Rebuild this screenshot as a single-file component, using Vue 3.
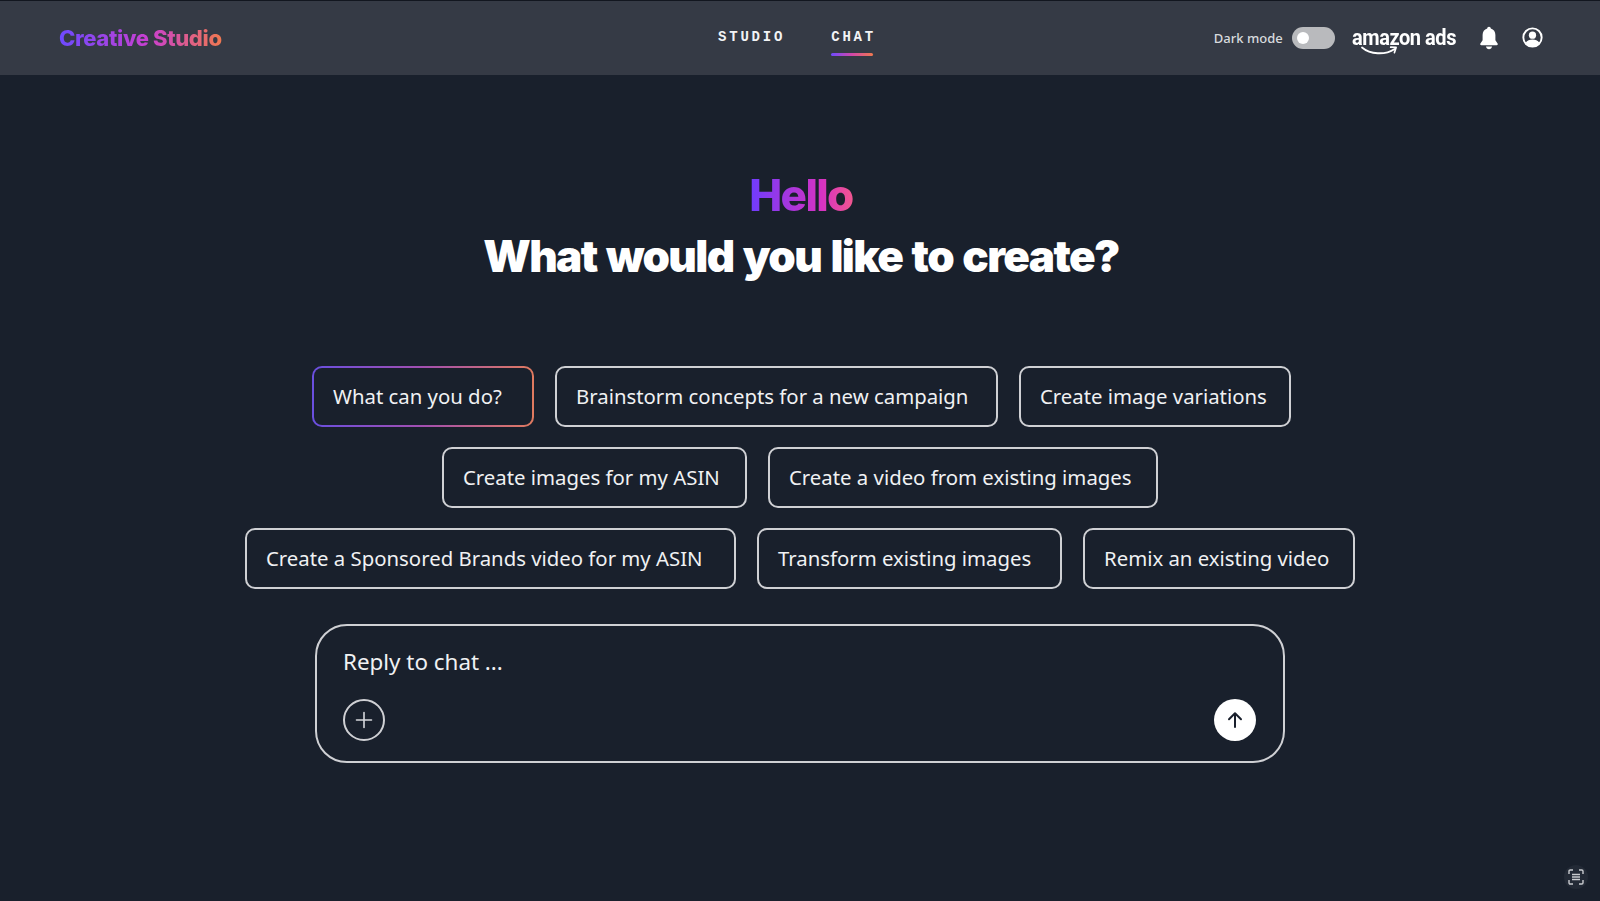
<template>
  <div class="page">
    <header class="topbar">
      <div class="logo">Creative Studio</div>

      <nav class="tabs">
        <a class="tab">STUDIO</a>
        <a class="tab active">CHAT</a>
      </nav>

      <div class="actions">
        <span class="dark-label">Dark mode</span>
        <span class="toggle"><span class="knob"></span></span>
        <div class="brand">
          <span>amazon ads</span>
          <svg class="smile" viewBox="0 0 42 12" fill="none">
            <path d="M1 2.500C10 9.500 26 10.500 37 4" stroke="#fff" stroke-width="2" stroke-linecap="round" />
            <path d="M32.500 2.200L38.500 2.400L36.600 7.600" stroke="#fff" stroke-width="1.800" stroke-linecap="round" stroke-linejoin="round" />
          </svg>
        </div>
        <svg class="bell" viewBox="0 0 20 24">
          <path d="M10 0.800c-1 0-1.700.7-1.800 1.700C5.300 3.300 3.600 5.800 3.600 9v5.200L1.400 17.600c-.5.800 0 1.700 1 1.700h15.200c1 0 1.500-.9 1-1.700l-2.200-3.400V9c0-3.200-1.700-5.700-4.600-6.500-.1-1-.8-1.700-1.800-1.700z" fill="#fff" />
          <path d="M6.900 20.600c.3 1.600 1.600 2.600 3.100 2.600s2.800-1 3.100-2.600z" fill="#fff" />
        </svg>
        <svg class="user" viewBox="0 0 22 22">
          <circle cx="11" cy="11" r="9.600" fill="none" stroke="#fff" stroke-width="2" />
          <circle cx="11" cy="8.600" r="3.800" fill="#fff" />
          <path d="M3.800 16.400c1.600-2.500 4.200-3.400 7.200-3.400s5.600.9 7.200 3.400c-1.600 2.400-4.200 4-7.200 4s-5.600-1.600-7.200-4z" fill="#fff" />
        </svg>
      </div>
    </header>

    <main class="content">
      <h1 class="hello">Hello</h1>
      <h2 class="question">What would you like to create?</h2>

      <div class="chips">
        <div v-for="(row, i) in rows" :key="i" class="chip-row">
          <button
            v-for="chip in row"
            :key="chip.label"
            class="chip"
            :class="{ selected: chip.label === selected }"
            :style="{ width: chip.width + 'px' }"
          >
            {{ chip.label }}
          </button>
        </div>
      </div>

      <div class="composer">
        <div class="placeholder">Reply to chat ...</div>
        <div class="composer-actions">
          <button class="add">
            <svg viewBox="0 0 20 20" width="20" height="20" fill="none">
              <path d="M10 2.500v15M2.500 10h15" stroke="#d6d8dc" stroke-width="1.600" stroke-linecap="round" />
            </svg>
          </button>
          <button class="send">
            <svg viewBox="0 0 20 20" width="20" height="20" fill="none">
              <path d="M10 17V3.500M4 9.200l6-6 6 6" stroke="#1a202c" stroke-width="2" stroke-linecap="round" stroke-linejoin="round" />
            </svg>
          </button>
        </div>
      </div>
    </main>

    <div class="capture">
      <svg viewBox="0 0 16 16" width="16" height="16" fill="none" stroke="#c9cbcf" stroke-width="1.400">
        <path d="M1 5V2.200C1 1.500 1.500 1 2.200 1H5M11 1h2.800c.7 0 1.200.5 1.200 1.200V5M15 11v2.800c0 .7-.5 1.200-1.200 1.200H11M5 15H2.200C1.500 15 1 14.500 1 13.800V11" />
        <path d="M4 5.500h8M4 8h8M4 10.500h8" stroke-width="1.500" />
      </svg>
    </div>
  </div>
</template>

<script setup>
const selected = "What can you do?"

const rows = [
  [
    { label: "What can you do?", width: 222 },
    { label: "Brainstorm concepts for a new campaign", width: 443 },
    { label: "Create image variations", width: 272 },
  ],
  [
    { label: "Create images for my ASIN", width: 305 },
    { label: "Create a video from existing images", width: 390 },
  ],
  [
    { label: "Create a Sponsored Brands video for my ASIN", width: 491 },
    { label: "Transform existing images", width: 305 },
    { label: "Remix an existing video", width: 272 },
  ],
]
</script>

<style>
html,
body {
  margin: 0;
  background: #19202c;
}
</style>

<style scoped>
.page {
  position: relative;
  height: 901px;
  overflow: hidden;
  background: #19202c;
  font-family: "Noto Sans", sans-serif;
  color: #fff;
}

/* Header */

.topbar {
  height: 74px;
  border-top: 1px solid #12161f;
  background: #353a45;
  display: grid;
  grid-template-columns: 1fr auto 1fr;
  align-items: center;
  padding: 0 57px 0 59px;
}

.logo {
  font-family: Inter, sans-serif;
  font-size: 22px;
  font-weight: 800;
  letter-spacing: -0.35px;
  width: fit-content;
  background: linear-gradient(90deg, #6d4aff, #c93fd0 55%, #f0784f);
  -webkit-background-clip: text;
  background-clip: text;
  color: transparent;
}

.tabs {
  display: flex;
  gap: 46px;
  transform: translateX(-4px);
}

.tab {
  position: relative;
  font-family: "Liberation Mono", monospace;
  font-size: 14px;
  font-weight: 700;
  letter-spacing: 2.8px;
  color: #f2f3f5;
  padding: 8px 0 10px;
}

.tab.active::after {
  content: "";
  position: absolute;
  left: 0;
  right: 3px;
  bottom: -1px;
  height: 3px;
  border-radius: 2px;
  background: linear-gradient(90deg, #6d4aff, #d347a8, #f0784f);
}

.actions {
  display: flex;
  align-items: center;
  justify-content: flex-end;
  margin-top: -1px;
}

.dark-label {
  font-size: 13px;
  font-weight: 500;
  color: #d8dade;
  margin-right: 9px;
}

.toggle {
  width: 43px;
  height: 22px;
  border-radius: 11px;
  background: #b9babd;
  display: flex;
  align-items: center;
  padding-left: 5px;
  box-sizing: border-box;
}

.knob {
  width: 12px;
  height: 12px;
  border-radius: 50%;
  background: #fff;
}

.brand {
  position: relative;
  margin: 0 -4px 0 17px;
  font-family: Roboto, sans-serif;
  font-size: 22px;
  font-weight: 700;
  letter-spacing: -0.5px;
  line-height: 30px;
  height: 30px;
  transform: scaleX(0.91);
  transform-origin: left;
}

.smile {
  position: absolute;
  left: 9px;
  top: 22px;
  width: 44px;
  height: 12px;
}

.bell {
  width: 20px;
  height: 24px;
  margin-left: 17px;
}

.user {
  width: 21px;
  height: 21px;
  margin-left: 23px;
}

/* Rubriker */

.content {
  display: flex;
  flex-direction: column;
  align-items: center;
  padding-top: 94px;
}

.hello {
  margin: 0 0 0 2px;
  font-family: Inter, sans-serif;
  font-size: 44px;
  line-height: 52px;
  font-weight: 800;
  letter-spacing: -1.6px;
  background: linear-gradient(90deg, #6d3cff, #d632c2 70%, #f0568f);
  -webkit-background-clip: text;
  background-clip: text;
  color: transparent;
}

.question {
  margin: 9px 0 0 2px;
  font-family: Inter, sans-serif;
  font-size: 44px;
  line-height: 52px;
  font-weight: 900;
  letter-spacing: -1.6px;
  word-spacing: 2px;
  color: #fff;
}

/* Chips */

.chips {
  margin-top: 84px;
  display: flex;
  flex-direction: column;
  gap: 20px;
}

.chip-row {
  display: flex;
  justify-content: center;
  gap: 21px;
}

.chip-row:first-child {
  padding-left: 3px;
}

.chip {
  height: 61px;
  padding: 0 0 2px 19px;
  box-sizing: border-box;
  border: 2px solid #cfd0d4;
  border-radius: 10px;
  background: transparent;
  color: #f0f1f3;
  font-family: "Noto Sans", sans-serif;
  font-size: 20.35px;
  text-align: left;
  white-space: nowrap;
}

.chip.selected {
  border-color: transparent;
  background:
    linear-gradient(#19202c, #19202c) padding-box,
    linear-gradient(90deg, #6a4fe0, #a24fb0 50%, #e07a5f) border-box;
}

/* Input */

.composer {
  margin-top: 35px;
  width: 970px;
  height: 139px;
  box-sizing: border-box;
  border: 2px solid #cfd0d4;
  border-radius: 32px;
  padding: 20px 27px 0 26px;
}

.placeholder {
  font-size: 22.4px;
  line-height: 32px;
  color: #f0f1f3;
}

.composer-actions {
  display: flex;
  justify-content: space-between;
  align-items: center;
  margin-top: 21px;
}

.add,
.send {
  width: 42px;
  height: 42px;
  border-radius: 50%;
  padding: 0;
  display: flex;
  align-items: center;
  justify-content: center;
}

.add {
  background: transparent;
  border: 2px solid #cfd0d4;
}

.send {
  background: #fff;
  border: none;
}

.capture {
  position: absolute;
  right: 12px;
  bottom: 12px;
  width: 16px;
  height: 16px;
  padding: 4px;
  border-radius: 50%;
  background: #232a36;
  display: flex;
}
</style>
